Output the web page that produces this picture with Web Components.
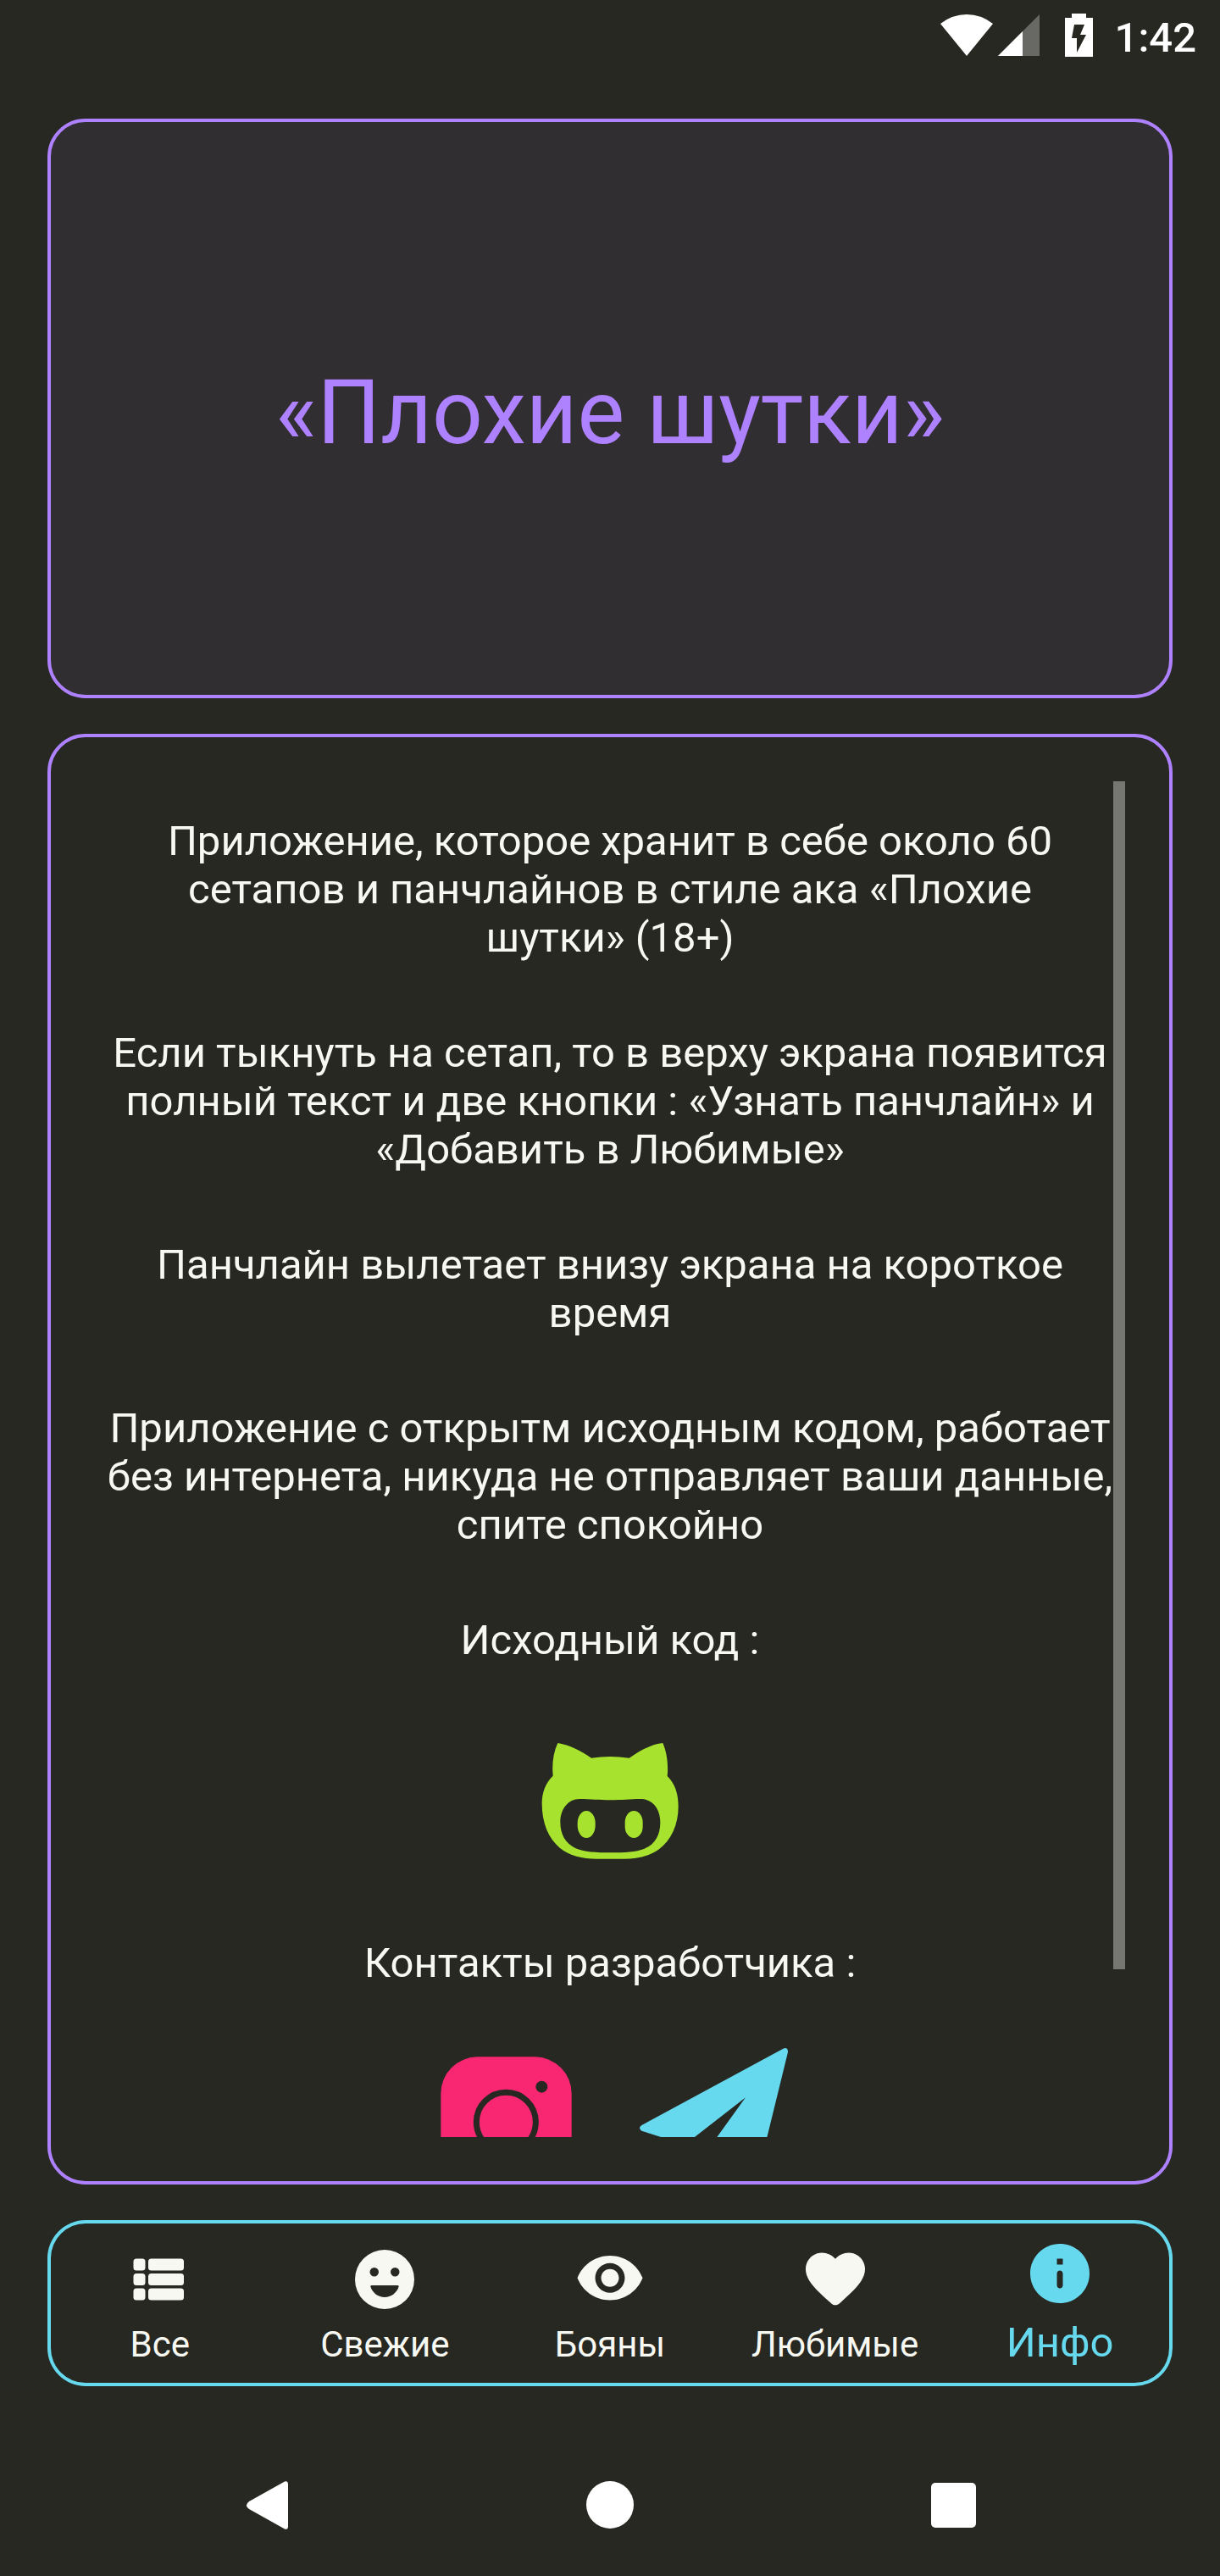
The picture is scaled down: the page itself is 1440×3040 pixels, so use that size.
<!DOCTYPE html>
<html lang="ru">
<head>
<meta charset="utf-8">
<meta name="viewport" content="width=device-width, initial-scale=1">
<title>Плохие шутки</title>
<style>
  :root {
    --bg: #272822;
    --surface: #312e31;
    --text: #f8f8f2;
    --purple: #ae81ff;
    --cyan: #66d9ef;
    --green: #a6e22e;
    --pink: #f92672;
  }
  body {
    margin: 0;
    background: var(--bg);
    color: var(--text);
    font: 49px/57px Roboto, "Noto Sans", sans-serif;
  }
</style>
</head>
<body>
<joke-app></joke-app>
<script>
const define = (name, html, setup) => {
  const template = document.createElement('template');
  template.innerHTML = html;
  customElements.define(name, class extends HTMLElement {
    constructor() {
      super();
      this.attachShadow({ mode: 'open' }).append(template.content.cloneNode(true));
    }
    connectedCallback() {
      if (setup) setup(this, this.shadowRoot);
    }
  });
};

const ICONS = {
  list: '<rect x="3" y="5" width="4" height="4" rx="1"/><rect x="3" y="10" width="4" height="4" rx="1"/><rect x="3" y="15" width="4" height="4" rx="1"/><rect x="8" y="5" width="12" height="4" rx="1"/><rect x="8" y="10" width="12" height="4" rx="1"/><rect x="8" y="15" width="12" height="4" rx="1"/>',
  smile: '<path fill-rule="evenodd" d="M12 2a10 10 0 1 0 0 20 10 10 0 0 0 0-20zM8.500 8a1.500 1.500 0 1 1 0 3 1.500 1.500 0 0 1 0-3zM15.500 8a1.500 1.500 0 1 1 0 3 1.500 1.500 0 0 1 0-3zM7.600 14h8.800q.5 0 .35.5C16 16.600 14.200 18 12 18s-4-1.400-4.750-3.500q-.15-.5.35-.5z"/>',
  eye: '<path fill-rule="evenodd" d="M12 4C7 4 2.730 7.110 1 11.500 2.730 15.890 7 19 12 19s9.270-3.110 11-7.500C21.270 7.110 17 4 12 4zm0 12.500c-2.760 0-5-2.240-5-5s2.240-5 5-5 5 2.240 5 5-2.240 5-5 5zm0-8c-1.660 0-3 1.340-3 3s1.340 3 3 3 3-1.340 3-3-1.340-3-3-3z"/>',
  heart: '<path d="M13.350 20.130c-.76.69-1.930.69-2.690-.01l-.11-.1C5.300 15.270 1.870 12.160 2 8.280c.06-1.700.93-3.330 2.340-4.290 2.640-1.800 5.900-.96 7.660 1.100 1.760-2.060 5.020-2.910 7.660-1.100 1.410.96 2.280 2.590 2.340 4.290.14 3.880-3.300 6.990-8.550 11.760l-.1.09z"/>',
  info: '<path fill-rule="evenodd" d="M12 2C6.480 2 2 6.480 2 12s4.480 10 10 10 10-4.480 10-10S17.520 2 12 2zm0 15c-.55 0-1-.45-1-1v-4c0-.55.45-1 1-1s1 .45 1 1v4c0 .55-.45 1-1 1zm1-8h-2V7h2v2z"/>'
};

define('status-bar', `
  <style>
    :host { display: flex; justify-content: flex-end; align-items: flex-start; height: 68px; padding: 16px 28px 0; color: #fff; font-weight: 500; }
    svg { display: block; height: 52px; fill: currentColor; }
    .wifi { width: 62px; margin-right: 6px; }
    .signal { width: 49px; margin-right: 30px; }
    .battery { width: 33px; margin-right: 26px; }
  </style>
  <svg class="wifi" viewBox="0 0 62 52" aria-hidden="true"><path d="M0 12Q14 1 31 1T62 12L31 50z"/></svg>
  <svg class="signal" viewBox="0 0 49 52" aria-hidden="true"><path d="M0 50L49 1V50z" opacity=".3"/><path d="M0 50L29 21V50z"/></svg>
  <svg class="battery" viewBox="0 0 33 52" aria-hidden="true"><path fill-rule="evenodd" d="M8 0H25V5H33V51H0V5H8zM11 13L8 29H14V46L25 25H18L23 13z"/></svg>
  <time>1:42</time>
`);

define('outline-card', `
  <style>
    :host { display: flex; flex-direction: column; box-sizing: border-box; min-height: 0; border: 4px solid var(--purple); border-radius: 45px; }
  </style>
  <slot></slot>
`);

define('scroll-pane', `
  <style>
    :host { display: flex; position: relative; flex: 1; min-height: 0; margin: 52px; }
    .view { flex: 1; overflow-y: auto; scrollbar-width: none; }
    .thumb { position: absolute; top: 0; right: 0; width: 14px; background: #767771; }
  </style>
  <div class="view"><slot></slot></div>
  <div class="thumb"></div>
`, (host, root) => {
  const view = root.querySelector('.view');
  const thumb = root.querySelector('.thumb');
  const update = () => {
    const ratio = view.clientHeight / view.scrollHeight;
    thumb.style.height = Math.round(view.clientHeight * ratio) + 'px';
    thumb.style.top = Math.round(view.scrollTop * ratio) + 'px';
  };
  view.addEventListener('scroll', update);
  new ResizeObserver(update).observe(view);
  update();
});

define('app-about', `
  <style>
    :host { display: block; padding: 42px 0 156px; text-align: center; }
    p { margin: 0 0 79px; }
    p.lead { margin-bottom: 72px; }
    .keep { white-space: nowrap; }
    .links { display: flex; justify-content: center; gap: 70px; }
    .links.source { margin-bottom: 77px; }
    a { display: block; }
    svg { display: block; width: 175px; height: 175px; }
  </style>
  <p>Приложение, которое хранит в себе около 60 сетапов и панчлайнов в стиле ака «Плохие <span class="keep">шутки» (18+)</span></p>
  <p>Если тыкнуть на сетап, то в верху экрана появится полный текст и две кнопки : «Узнать панчлайн» и «Добавить в Любимые»</p>
  <p>Панчлайн вылетает внизу экрана на короткое время</p>
  <p>Приложение с открытм исходным кодом, работает без интернета, никуда не отправляет ваши данные, спите спокойно</p>
  <p class="lead">Исходный код :</p>
  <div class="links source">
    <a href="#source" aria-label="GitHub"><svg viewBox="97 48 525 525" fill="var(--green)">
      <path fill-rule="evenodd" d="M173 111C210 116 255 138 292 164Q358 154 426 164C465 137 505 115 545 111C560 145 565 190 561 228C588 255 600 290 600 335C600 400 575 455 530 488C495 513 450 521 410 521H310C260 521 215 510 180 482C140 448 117 395 117 325C117 285 130 252 156 227C152 185 157 145 173 111ZM250 309C210 309 182 345 182 390C182 435 200 465 235 483C265 497 310 499 360 499C410 499 450 497 480 485C515 470 536 440 536 392C536 345 510 309 465 309C430 309 400 313 360 313C320 313 290 309 250 309Z"/>
      <rect x="243" y="351" width="63" height="96" rx="32" ry="44"/><rect x="411" y="351" width="63" height="96" rx="32" ry="40"/>
    </svg></a>
  </div>
  <p class="lead">Контакты разработчика :</p>
  <div class="links">
    <a href="#instagram" aria-label="Instagram"><svg viewBox="90 111 525 525" fill="var(--pink)">
      <rect x="121" y="142" width="463" height="463" rx="130"/>
      <circle cx="352" cy="373" r="105" fill="none" stroke="var(--bg)" stroke-width="21"/>
      <circle cx="478" cy="248" r="21" fill="var(--bg)"/>
    </svg></a>
    <a href="#telegram" aria-label="Telegram"><svg viewBox="825 111 525 525" fill="var(--cyan)">
      <path d="M1333 113L832 384Q818 394 832 404L985 453L1200 286L1060 480L1215 600Q1232 610 1236 590L1350 125Q1350 106 1333 113Z"/>
    </svg></a>
  </div>
`);

define('tab-item', `
  <style>
    :host { display: flex; flex: 1; min-width: 0; }
    button { flex: 1; display: flex; flex-direction: column; align-items: center; justify-content: flex-end; gap: 8px; margin: 0; padding: 0 0 23px; border: 0; background: none; color: var(--text); font: inherit; font-size: 42px; line-height: 53px; cursor: pointer; }
    svg { display: block; width: 84px; height: 84px; fill: currentColor; }
    :host([active]) button { gap: 11px; color: var(--cyan); font-size: 49px; line-height: 57px; }
  </style>
  <button type="button"><svg viewBox="0 0 24 24" aria-hidden="true"></svg><span><slot></slot></span></button>
`, (host, root) => {
  root.querySelector('svg').innerHTML = ICONS[host.getAttribute('icon')];
  if (host.hasAttribute('active')) root.querySelector('button').setAttribute('aria-current', 'page');
});

define('tab-bar', `
  <style>
    :host { display: block; }
    nav { display: flex; height: 196px; border-radius: 45px; box-shadow: inset 0 0 0 4px var(--cyan); }
  </style>
  <nav><slot></slot></nav>
`);

define('system-nav', `
  <style>
    :host { display: flex; justify-content: center; height: 168px; color: #fff; }
    button { flex: 0 1 406px; display: grid; place-items: center; margin: 0; padding: 0; border: 0; background: none; color: inherit; }
    svg { width: 84px; height: 84px; fill: currentColor; }
  </style>
  <button type="button" aria-label="Назад"><svg viewBox="0 0 84 84"><path d="M64 14.500Q68 13 68 18V67Q68 72 64 70.500L22 47Q16 42.500 22 38z"/></svg></button>
  <button type="button" aria-label="Домой"><svg viewBox="0 0 84 84"><circle cx="42" cy="42" r="28"/></svg></button>
  <button type="button" aria-label="Недавние"><svg viewBox="0 0 84 84"><rect x="15" y="16" width="53" height="53" rx="5"/></svg></button>
`);

define('joke-app', `
  <style>
    :host { display: flex; flex-direction: column; height: 100vh; }
    main { flex: 1; min-height: 0; display: flex; flex-direction: column; gap: 42px; padding: 56px; }
    .hero { flex: 0 0 684px; justify-content: center; padding-top: 10px; background: var(--surface); }
    .info { flex: 1; }
    h1 { margin: 0; color: var(--purple); font-size: 105px; line-height: 123px; font-weight: 400; text-align: center; }
  </style>
  <status-bar></status-bar>
  <main>
    <outline-card class="hero"><h1>«Плохие шутки»</h1></outline-card>
    <outline-card class="info"><scroll-pane><app-about></app-about></scroll-pane></outline-card>
    <tab-bar>
      <tab-item icon="list">Все</tab-item>
      <tab-item icon="smile">Свежие</tab-item>
      <tab-item icon="eye">Бояны</tab-item>
      <tab-item icon="heart">Любимые</tab-item>
      <tab-item icon="info" active>Инфо</tab-item>
    </tab-bar>
  </main>
  <system-nav></system-nav>
`);
</script>
</body>
</html>
